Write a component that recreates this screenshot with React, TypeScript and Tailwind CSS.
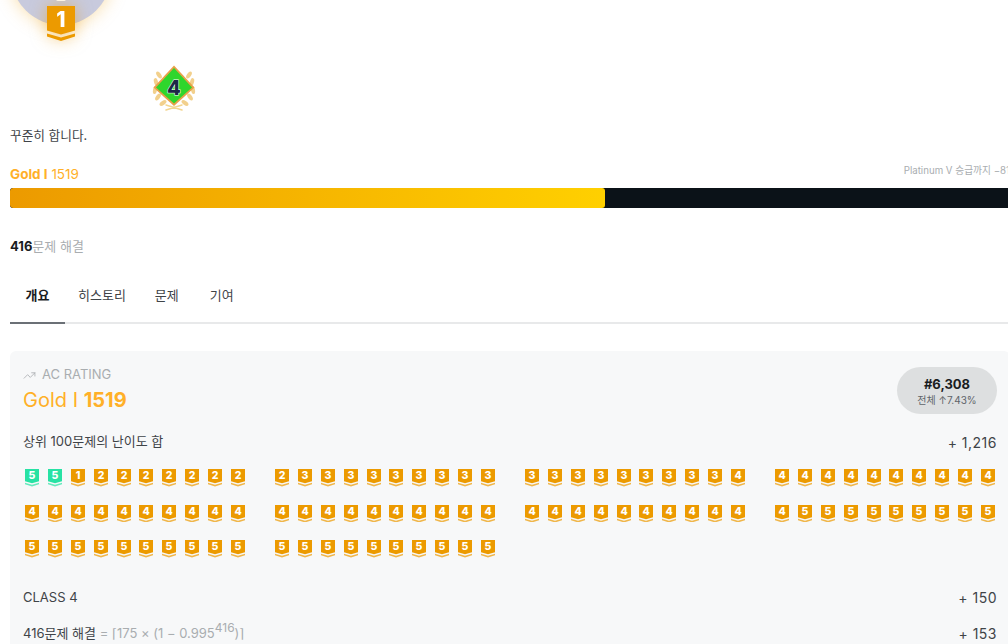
import React from "react";
import { TrendingUp } from "lucide-react";

const GOLD = "#ec9a00";
const EMERALD = "#27e2a4";

// tier of each solved problem, grouped by ten
const rows: number[][][] = [
  [
    [5, 5, 1, 2, 2, 2, 2, 2, 2, 2],
    [2, 3, 3, 3, 3, 3, 3, 3, 3, 3],
    [3, 3, 3, 3, 3, 3, 3, 3, 3, 4],
    [4, 4, 4, 4, 4, 4, 4, 4, 4, 4],
  ],
  [
    [4, 4, 4, 4, 4, 4, 4, 4, 4, 4],
    [4, 4, 4, 4, 4, 4, 4, 4, 4, 4],
    [4, 4, 4, 4, 4, 4, 4, 4, 4, 4],
    [4, 5, 5, 5, 5, 5, 5, 5, 5, 5],
  ],
  [
    [5, 5, 5, 5, 5, 5, 5, 5, 5, 5],
    [5, 5, 5, 5, 5, 5, 5, 5, 5, 5],
  ],
];

const Tier: React.FC<{ level: number; color?: string; size?: number }> = ({
  level,
  color = GOLD,
  size = 14,
}) => (
  <svg width={size} height={size * 1.25} viewBox="0 0 28 35" className="block shrink-0">
    <path d="M0 0H28V24.5L14 28.5L0 24.5Z" fill={color} />
    <path d="M0 27.5L14 31.5L28 27.5V30.5L14 35L0 30.5Z" fill={color} opacity={size > 14 ? 1 : 0.7} />
    <text
      x="14"
      y="20.5"
      textAnchor="middle"
      fill="#fff"
      fontSize="21"
      fontWeight="800"
      fontFamily="Inter, sans-serif"
    >
      {level}
    </text>
  </svg>
);

const leaves = [
  [7, 10, -35],
  [4, 17, -15],
  [3, 25, 10],
  [6, 32, 35],
  [11, 38, 55],
];

const Laurel = () => (
  <svg width="44" height="46" viewBox="0 0 44 46" className="block">
    <g fill="#f0c878" opacity="0.85">
      {leaves.map(([x, y, r], i) => (
        <React.Fragment key={i}>
          <ellipse cx={x} cy={y} rx="2" ry="4" transform={`rotate(${r} ${x} ${y})`} />
          <ellipse cx={44 - x} cy={y} rx="2" ry="4" transform={`rotate(${-r} ${44 - x} ${y})`} />
        </React.Fragment>
      ))}
    </g>
    <path d="M14 45L30 40M30 45L14 40" stroke="#f3d68f" strokeWidth="1.5" strokeLinecap="round" />
    <path d="M22 0.5L42.5 22.5L22 41L1.5 22.5Z" fill="#e8a048" />
    <path d="M22 3L40 22.5L22 38.5L4 22.5Z" fill="#2fd62c" />
    <text
      x="22"
      y="29.5"
      textAnchor="middle"
      fill="#1c2747"
      stroke="#fff"
      strokeWidth="1"
      paintOrder="stroke"
      fontSize="20"
      fontWeight="800"
      fontFamily="Inter, sans-serif"
    >
      4
    </text>
  </svg>
);

const ScoreRow: React.FC<{ label: React.ReactNode; score: string }> = ({ label, score }) => (
  <div className="flex h-[20px] items-center justify-between text-[13px] text-[#3f4448]">
    <div>{label}</div>
    <div className="text-[14px] tracking-[0.5px]">{score}</div>
  </div>
);

export default function App() {
  return (
    <div
      className="h-[644px] w-[1008px] overflow-hidden bg-white"
      style={{ fontFamily: 'Inter, "Noto Sans CJK KR", sans-serif' }}
    >
      <div className="ml-[10px] w-[1000px]">
        {/* Avatar & badge */}
        <div className="relative -mt-[75px] ml-[1px] h-[100px] w-[100px] rounded-full bg-[#c8cadd] shadow-[0_0_18px_rgba(236,154,0,0.35)]">
          <div className="absolute bottom-[24px] left-[45px] h-[2px] w-[10px] rounded-b-full bg-white" />
          <div className="absolute -bottom-[16px] left-[36px] drop-shadow-[0_0_8px_rgba(236,154,0,0.5)]">
            <Tier level={1} size={28} />
          </div>
        </div>

        <div className="ml-[142px] mt-[40px]">
          <Laurel />
        </div>

        <p className="mt-[15px] h-[20px] text-[12.7px] leading-[20px] text-[#3f4448]">꾸준히 합니다.</p>

        {/* Tier progress */}
        <div className="mt-[18px] flex h-[20px] items-center justify-between">
          <div className="text-[13.5px] text-[#ffb028]">
            <span className="font-bold">Gold I</span> 1519
          </div>
          <div className="pb-[5px] text-[9.7px] text-[#a9adb0]">Platinum V 승급까지 −81</div>
        </div>
        <div className="mt-[4px] h-[20px] overflow-hidden rounded-[3px] bg-[#0b1218]">
          <div className="h-full w-[595px] rounded-[3px] bg-gradient-to-r from-[#ec9a00] to-[#ffd000]" />
        </div>

        <div className="mt-[28px] h-[20px] text-[13px] leading-[20px] text-[#a9adb0]">
          <span className="font-bold text-[#1a1d1f]">416</span>문제 해결
        </div>

        {/* Tabs */}
        <div className="mt-[14px] flex h-[54px] border-b-2 border-[#e8e9ea] pb-[1px] text-[13px] text-[#3f4448]">
          <div className="-mb-[3px] flex w-[55px] items-center justify-center border-b-2 border-[#6b7076] font-bold text-[#1a1d1f]">
            개요
          </div>
          <div className="ml-[13px] flex items-center">히스토리</div>
          <div className="ml-[29px] flex items-center">문제</div>
          <div className="ml-[31px] flex items-center">기여</div>
        </div>

        {/* AC rating card */}
        <div className="mt-[27px] h-[320px] rounded-t-[6px] bg-[#f7f8f9] px-[13px] pt-[16px]">
          <div className="flex items-start justify-between">
            <div>
              <div className="flex h-[16px] items-center gap-[6px] text-[13px] text-[#a9adb0]">
                <TrendingUp size={13} strokeWidth={1.5} />
                AC RATING
              </div>
              <div className="mt-[4px] text-[20px] leading-[26px] text-[#ffb028]">
                Gold I <span className="font-bold">1519</span>
              </div>
            </div>
            <div className="flex h-[47px] w-[100px] flex-col items-center justify-center rounded-full bg-[#dddfe0]">
              <div className="text-[13px] font-bold leading-[18px] text-[#1a1d1f]">#6,308</div>
              <div className="text-[10px] leading-[14px] text-[#5f6469]">전체 ↑7.43%</div>
            </div>
          </div>

          <div className="mt-[18px]">
            <ScoreRow label="상위 100문제의 난이도 합" score="+ 1,216" />
          </div>

          <div className="mt-[17px] flex flex-col gap-[18px]">
            {rows.map((groups, r) => (
              <div key={r} className="flex gap-[30px] pl-[2px]">
                {groups.map((group, g) => (
                  <div key={g} className="flex w-[220px] justify-between">
                    {group.map((level, i) => (
                      <Tier
                        key={i}
                        level={level}
                        color={r === 0 && g === 0 && i < 2 ? EMERALD : GOLD}
                      />
                    ))}
                  </div>
                ))}
              </div>
            ))}
          </div>

          <div className="mt-[30px] flex flex-col gap-[16px]">
            <ScoreRow label="CLASS 4" score="+ 150" />
            <ScoreRow
              label={
                <>
                  416문제 해결{" "}
                  <span className="text-[#a9adb0]">
                    = ⌈175 × (1 − 0.995<sup className="text-[12px] leading-none">416</sup>)⌉
                  </span>
                </>
              }
              score="+ 153"
            />
          </div>
        </div>
      </div>
    </div>
  );
}
